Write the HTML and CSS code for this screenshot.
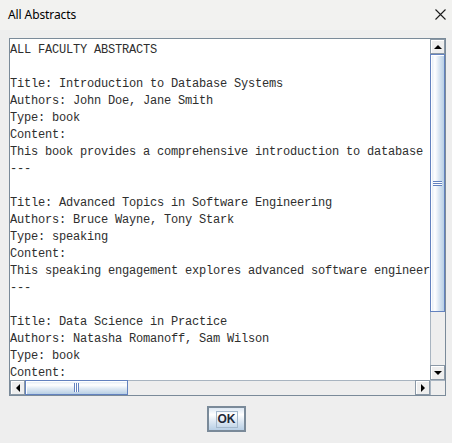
FILE: index.html
```html
<!DOCTYPE html>
<html lang="en">
<head>
<meta charset="utf-8">
<title>All Abstracts</title>
<link rel="stylesheet" href="styles.css">
</head>
<body>
<div class="window">
  <header class="titlebar">
    <span class="title">All Abstracts</span>
    <span class="close" aria-label="Close">
      <svg width="11" height="11" viewBox="0 0 11 11"><path d="M0.5 0.5 L10.5 10.5 M10.5 0.5 L0.5 10.5" stroke="#1c1c1c" stroke-width="1.1" fill="none"/></svg>
    </span>
  </header>
  <main class="content">
    <div class="scrollpane">
      <div class="viewport">
<pre class="textarea">ALL FACULTY ABSTRACTS

Title: Introduction to Database Systems
Authors: John Doe, Jane Smith
Type: book
Content:
This book provides a comprehensive introduction to database systems.
---

Title: Advanced Topics in Software Engineering
Authors: Bruce Wayne, Tony Stark
Type: speaking
Content:
This speaking engagement explores advanced software engineering.
---

Title: Data Science in Practice
Authors: Natasha Romanoff, Sam Wilson
Type: book
Content:
This book presents practical data science workflows.
---
</pre>
      </div>
      <div class="vbar">
        <div class="sbtn"><span class="arrow up"></span></div>
        <div class="track vtrack">
          <div class="thumb vthumb"><span class="grip vgrip"></span></div>
        </div>
        <div class="sbtn"><span class="arrow down"></span></div>
      </div>
      <div class="hbar">
        <div class="sbtn"><span class="arrow left"></span></div>
        <div class="track htrack">
          <div class="thumb hthumb"><span class="grip hgrip"></span></div>
        </div>
        <div class="sbtn"><span class="arrow right"></span></div>
      </div>
      <div class="corner"></div>
    </div>
    <footer class="buttons">
      <button class="ok"><span class="focus">OK</span></button>
    </footer>
  </main>
</div>
</body>
</html>
```

FILE: styles.css
```css
html, body {
  margin: 0;
  padding: 0;
}

body {
  width: 452px;
  height: 443px;
  overflow: hidden;
  background: #eeeeee;
}

.window {
  display: flex;
  flex-direction: column;
  width: 452px;
  height: 443px;
}

/* Title bar */
.titlebar {
  height: 30px;
  flex: none;
  display: flex;
  align-items: center;
  justify-content: space-between;
  background: #f2f2f0;
  padding: 0 6px 1px 8px;
  box-sizing: border-box;
}

.title {
  font-family: "Noto Sans", "Segoe UI", sans-serif;
  font-size: 12px;
  color: #000;
  letter-spacing: -0.1px;
}

.close {
  display: flex;
  width: 11px;
  height: 11px;
}

/* Dialog body */
.content {
  flex: 1;
  display: flex;
  flex-direction: column;
  padding: 8px 7px 0 9px;
}

.scrollpane {
  width: 437px;
  height: 358px;
  box-sizing: border-box;
  border: 1px solid #7a8a99;
  display: grid;
  grid-template-columns: 1fr 15px;
  grid-template-rows: 1fr 15px;
  background: #fff;
}

.viewport {
  overflow: hidden;
  background: #fff;
}

.textarea {
  margin: 0;
  padding: 3px 0 0 0;
  font-family: "Courier New", "Nimbus Mono PS", "Nimbus Mono L", "FreeMono", "Liberation Mono", monospace;
  font-size: 12px;
  letter-spacing: -0.2px;
  line-height: 17px;
  color: #2e2e2e;
  white-space: pre;
}

/* Metal scrollbars */
.vbar {
  display: flex;
  flex-direction: column;
  background: #eeeeee;
}

.hbar {
  display: flex;
  flex-direction: row;
  background: #eeeeee;
}

.corner {
  background: #eeeeee;
  border-left: 1px solid #a8b4c0;
  border-top: 1px solid #a8b4c0;
}

.sbtn {
  width: 15px;
  height: 15px;
  flex: none;
  box-sizing: border-box;
  border: 1px solid #8a98a6;
  box-shadow: inset 1px 1px 0 #ffffff;
  background: #eeeeee;
  display: flex;
  align-items: center;
  justify-content: center;
}

.arrow {
  width: 0;
  height: 0;
  border: 4px solid transparent;
}

.arrow.up { border-bottom-color: #000; border-top-width: 0; }
.arrow.down { border-top-color: #000; border-bottom-width: 0; }
.arrow.left { border-right-color: #000; border-left-width: 0; }
.arrow.right { border-left-color: #000; border-right-width: 0; }

.track {
  flex: 1;
  display: flex;
  background: #eeeeee;
}

.vtrack {
  flex-direction: column;
  border-left: 1px solid #a8b4c0;
}

.htrack {
  flex-direction: row;
  border-top: 1px solid #a8b4c0;
}

.thumb {
  box-sizing: border-box;
  border: 1px solid #6382bf;
  box-shadow: inset 1px 1px 0 #ffffff;
  display: flex;
  align-items: center;
  justify-content: center;
}

.vthumb {
  height: 258px;
  margin-left: -1px;
  background: linear-gradient(to right, #dde8f3 0%, #ffffff 30%, #dde8f3 60%, #b8cfe5 100%);
}

.hthumb {
  width: 103px;
  margin-top: -1px;
  background: linear-gradient(to bottom, #dde8f3 0%, #ffffff 30%, #dde8f3 60%, #b8cfe5 100%);
}

.grip {
  display: block;
}

.vgrip {
  width: 9px;
  height: 5px;
  background: repeating-linear-gradient(to bottom, #6382bf 0 1px, #ffffff 1px 2px);
}

.hgrip {
  width: 5px;
  height: 9px;
  background: repeating-linear-gradient(to right, #6382bf 0 1px, #ffffff 1px 2px);
}

/* Button row */
.buttons {
  display: flex;
  justify-content: center;
  padding-top: 10px;
}

/* Default button: thick frame and gradient face */
.ok {
  width: 39px;
  height: 26px;
  margin-left: -1px;
  box-sizing: border-box;
  border: 2px solid #7a8a99;
  border-radius: 0;
  background: linear-gradient(to bottom, #dde8f3 0%, #ffffff 30%, #dde8f3 60%, #b8cfe5 100%);
  padding: 0;
  display: flex;
  align-items: center;
  justify-content: center;
  font-family: "Liberation Sans", Arial, sans-serif;
  font-weight: bold;
  font-size: 12px;
  color: #1e2838;
}

/* Focus ring drawn around the label */
.focus {
  display: block;
  border: 1px solid #a3b8cc;
  padding: 1px;
  line-height: 13px;
}
```
